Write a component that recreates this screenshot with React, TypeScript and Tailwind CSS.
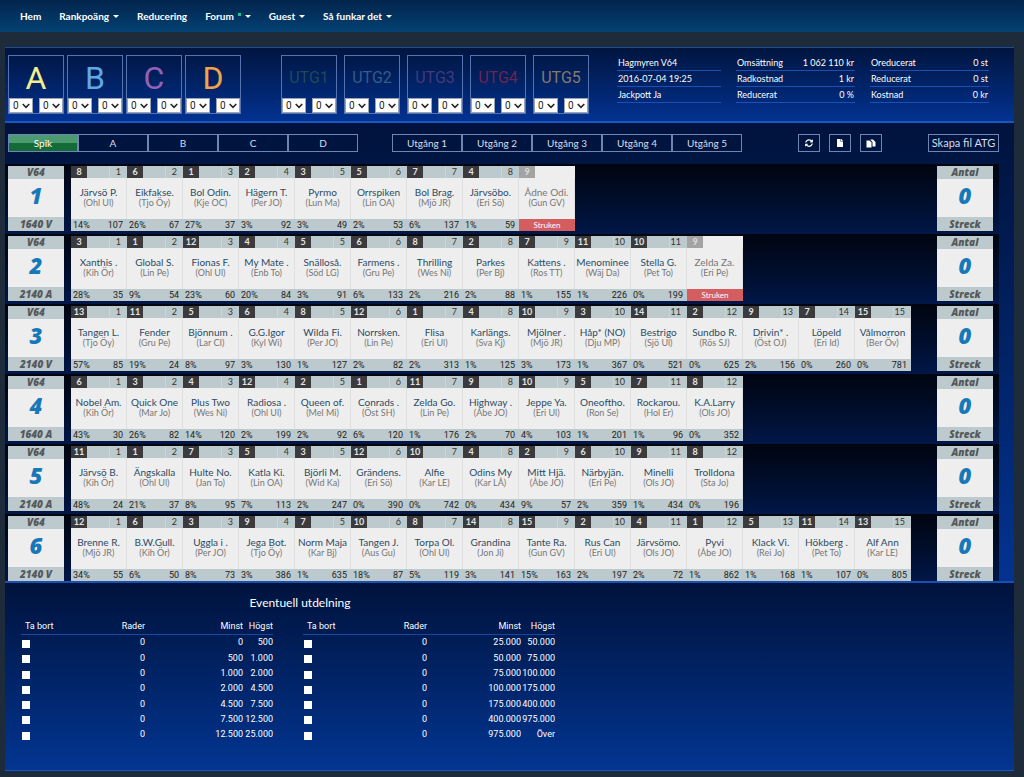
import type { ReactNode } from 'react';
import { FaFile, FaSyncAlt } from 'react-icons/fa';

type Horse = {
  nr: number;
  name: string;
  driver: string;
  percent?: number;
  odds?: number;
};

type Race = {
  nr: number;
  distance: string;
  horses: Horse[];
};

// number|name|driver|percent|odds, a scratched horse has no percent and odds
const parse = (text: string): Horse[] =>
  text
    .trim()
    .split('\n')
    .map((line) => {
      const [nr, name, driver, percent, odds] = line.trim().split('|');
      return {
        nr: Number(nr),
        name,
        driver,
        percent: percent ? Number(percent) : undefined,
        odds: odds ? Number(odds) : undefined,
      };
    });

const races: Race[] = [
  {
    nr: 1,
    distance: '1640 V',
    horses: parse(`
      8|Järvsö P.|Ohl Ul|14|107
      6|Eikfakse.|Tjo Öy|26|67
      1|Bol Odin.|Kje OC|27|37
      2|Hägern T.|Per JO|3|92
      3|Pyrmo|Lun Ma|3|49
      5|Orrspiken|Lin OA|2|53
      7|Bol Brag.|Mjö JR|6|137
      4|Järvsöbo.|Eri Sö|1|59
      9|Ådne Odi.|Gun GV`),
  },
  {
    nr: 2,
    distance: '2140 A',
    horses: parse(`
      3|Xanthis .|Kih Ör|28|35
      1|Global S.|Lin Pe|9|54
      12|Fionas F.|Ohl Ul|23|60
      4|My Mate .|Enb To|20|84
      5|Snälloså.|Söd LG|3|91
      6|Farmens .|Gru Pe|6|133
      8|Thrilling|Wes Ni|2|216
      2|Parkes|Per Bj|2|88
      7|Kattens .|Ros TT|1|155
      11|Menominee|Wäj Da|1|226
      10|Stella G.|Pet To|0|199
      9|Zelda Za.|Eri Pe`),
  },
  {
    nr: 3,
    distance: '2140 V',
    horses: parse(`
      13|Tangen L.|Tjo Öy|57|85
      11|Fender|Gru Pe|19|24
      5|Bjönnum .|Lar CI|8|97
      6|G.G.Igor|Kyl Wi|3|130
      8|Wilda Fi.|Per JO|1|127
      12|Norrsken.|Lin Pe|2|82
      1|Flisa|Eri Ul|2|313
      4|Karlängs.|Sva Kj|1|125
      10|Mjölner .|Mjö JR|3|173
      3|Håp* (NO)|Dju MP|1|367
      14|Bestrigo|Sjö Ul|0|521
      2|Sundbo R.|Rös SJ|0|625
      9|Drivin* .|Öst OJ|2|156
      7|Löpeld|Eri Id|0|260
      15|Vålmorron|Ber Öv|0|781`),
  },
  {
    nr: 4,
    distance: '1640 A',
    horses: parse(`
      6|Nobel Am.|Kih Ör|43|30
      3|Quick One|Mar Jo|26|82
      4|Plus Two|Wes Ni|14|120
      12|Radiosa .|Ohl Ul|2|199
      2|Queen of.|Mel Mi|2|92
      1|Conrads .|Öst SH|6|120
      11|Zelda Go.|Lin Pe|1|176
      9|Highway .|Åbe JO|2|70
      10|Jeppe Ya.|Eri Ul|4|103
      5|Oneoftho.|Ron Se|1|201
      7|Rockarou.|Hol Er|1|96
      8|K.A.Larry|Ols JO|0|352`),
  },
  {
    nr: 5,
    distance: '2140 A',
    horses: parse(`
      11|Järvsö B.|Kih Ör|48|24
      1|Ängskalla|Ohl Ul|21|37
      7|Hulte No.|Jan To|8|95
      5|Katla Ki.|Lin OA|7|113
      3|Björli M.|Wid Ka|2|247
      12|Grändens.|Eri Sö|0|390
      10|Alfie|Kar LE|0|742
      4|Odins My|Kar LÅ|0|434
      2|Mitt Hjä.|Åbe JO|9|57
      6|Närbyjän.|Eri Pe|2|359
      9|Minelli|Ols JO|1|434
      8|Trolldona|Sta Jo|0|196`),
  },
  {
    nr: 6,
    distance: '2140 V',
    horses: parse(`
      12|Brenne R.|Mjö JR|34|55
      6|B.W.Gull.|Kih Ör|6|50
      3|Uggla i .|Per JO|8|73
      9|Jega Bot.|Tjo Öy|3|386
      7|Norm Maja|Kar Bj|1|635
      10|Tangen J.|Aus Gu|18|87
      8|Torpa Ol.|Ohl Ul|5|119
      14|Grandina|Jon Ji|3|141
      15|Tante Ra.|Gun GV|15|163
      2|Rus Can|Eri Ul|2|197
      4|Järvsömo.|Ols JO|2|72
      1|Pyvi|Åbe JO|1|862
      5|Klack Vi.|Rei Jo|1|168
      11|Hökberg .|Pet To|1|107
      13|Alf Ann|Kar LE|0|805`),
  },
];

const menu = [
  { label: 'Hem' },
  { label: 'Rankpoäng', dropdown: true },
  { label: 'Reducering' },
  { label: 'Forum', dropdown: true, unread: true },
  { label: 'Guest', dropdown: true },
  { label: 'Så funkar det', dropdown: true },
];

const ranks = [
  { label: 'A', color: 'text-[#f2ef8e]' },
  { label: 'B', color: 'text-[#5fa8e8]' },
  { label: 'C', color: 'text-[#9361b5]' },
  { label: 'D', color: 'text-[#f2a348]' },
];

const exits = [
  { label: 'UTG1', color: 'text-[#1f4a5c]' },
  { label: 'UTG2', color: 'text-[#345c8c]' },
  { label: 'UTG3', color: 'text-[#45397c]' },
  { label: 'UTG4', color: 'text-[#6e2450]' },
  { label: 'UTG5', color: 'text-[#85796f]' },
];

const info = [
  {
    width: 'w-[104px]',
    rows: [['Hagmyren V64'], ['2016-07-04 19:25'], ['Jackpott Ja']],
  },
  {
    width: 'w-[119px]',
    rows: [
      ['Omsättning', '1 062 110 kr'],
      ['Radkostnad', '1 kr'],
      ['Reducerat', '0 %'],
    ],
  },
  {
    width: 'w-[119px]',
    rows: [
      ['Oreducerat', '0 st'],
      ['Reducerat', '0 st'],
      ['Kostnad', '0 kr'],
    ],
  },
];

const payouts = [
  {
    maxWidth: 'w-[30px]',
    rows: [
      ['0', '500'],
      ['500', '1.000'],
      ['1.000', '2.000'],
      ['2.000', '4.500'],
      ['4.500', '7.500'],
      ['7.500', '12.500'],
      ['12.500', '25.000'],
    ],
  },
  {
    maxWidth: 'w-[34px]',
    rows: [
      ['25.000', '50.000'],
      ['50.000', '75.000'],
      ['75.000', '100.000'],
      ['100.000', '175.000'],
      ['175.000', '400.000'],
      ['400.000', '975.000'],
      ['975.000', 'Över'],
    ],
  },
];

function CountSelect({ label }: { label: string }) {
  return (
    <div className="relative h-[15px] w-6">
      <select
        aria-label={label}
        defaultValue="0"
        className="block h-full w-full appearance-none border border-[#9aa4b8] bg-white pl-[3px] font-['Roboto',sans-serif] text-[10px] leading-[13px] text-[#222]"
      >
        {[0, 1, 2, 3, 4, 5, 6].map((n) => (
          <option key={n} value={n}>
            {n}
          </option>
        ))}
      </select>
      <svg
        viewBox="0 0 8 6"
        className="pointer-events-none absolute top-[5px] right-[3px] h-[6px] w-2"
        fill="none"
        stroke="#222"
        strokeWidth="1.5"
      >
        <path d="M0.7 0.9 4 4.3 7.3 0.9" />
      </svg>
    </div>
  );
}

function RankBox({ label, className }: { label: string; className: string }) {
  return (
    <div className="flex h-[59px] w-14 flex-col border border-[#5673ae]">
      <div className={`flex grow items-center justify-center pt-[2px] font-['Roboto',sans-serif] ${className}`}>
        {label}
      </div>
      <div className="flex justify-between">
        <CountSelect label={`${label} minst`} />
        <CountSelect label={`${label} högst`} />
      </div>
    </div>
  );
}

function Tabs({ items, active }: { items: string[]; active?: string }) {
  return (
    <div className="flex">
      {items.map((item) => (
        <button
          key={item}
          type="button"
          className={`h-[18px] w-[70px] border border-[#6f86b5] text-[10px] leading-4 ${
            item === active
              ? 'bg-linear-to-b from-[#4b9a70] from-50% to-[#146b38] to-50% text-white'
              : 'bg-[#001440] text-[#d5dcea]'
          }`}
        >
          {item}
        </button>
      ))}
    </div>
  );
}

function IconButton({ label, children }: { label: string; children: ReactNode }) {
  return (
    <button
      type="button"
      aria-label={label}
      className="flex h-[18px] w-[22px] items-center justify-center border border-[#6f86b5] text-white"
    >
      {children}
    </button>
  );
}

function SideCard({ top, value, bottom }: { top: string; value: string; bottom: string }) {
  return (
    <div className="flex h-[65px] w-14 shrink-0 flex-col bg-[#eee] text-center font-['Open_Sans',sans-serif] font-extrabold italic">
      <div className="h-[13px] bg-[#bccacd] text-[10px] leading-[13px] text-[#55585b]">{top}</div>
      <div className="grow text-[22px] leading-8 text-[#1678b8]">{value}</div>
      <div className="h-[14px] bg-[#bccacd] text-[10px] leading-[14px] text-[#55585b]">{bottom}</div>
    </div>
  );
}

function HorseCell({ horse, index }: { horse: Horse; index: number }) {
  const scratched = horse.percent === undefined;

  return (
    <li className="flex h-[65px] w-14 shrink-0 flex-col bg-[#eee]">
      <div
        className={`flex h-3 justify-between text-[9px] leading-3 ${scratched ? '' : 'bg-[#bccacd]'}`}
      >
        <span
          className={`w-4 text-center font-bold ${
            scratched ? 'bg-[#a3a3a3] text-[#ddd]' : 'bg-[#3b3b3e] text-[#e5e5e5]'
          }`}
        >
          {horse.nr}
        </span>
        {scratched ? null : (
          <span className="w-[18px] border-l border-[#c8d4d6] pr-[6px] text-right text-[#333]">
            {index}
          </span>
        )}
      </div>
      <div
        className={`flex grow flex-col items-center border-r border-[#dfdfdf] pt-2 whitespace-nowrap ${
          scratched ? 'text-[#777]' : 'text-[#2c4a63]'
        }`}
      >
        <span className="text-[10px] leading-3">{horse.name}</span>
        <span className="text-[9px] leading-[10px] text-[#777]">({horse.driver})</span>
      </div>
      {scratched ? (
        <div className="h-3 bg-[#d45d5f] text-center text-[8px] leading-3 text-white">Struken</div>
      ) : (
        <div className="flex h-3 justify-between bg-[#bccacd] pr-1 pl-[2px] font-['Roboto',sans-serif] text-[9px] leading-3 text-[#222]">
          <span>{horse.percent}%</span>
          <span>{horse.odds}</span>
        </div>
      )}
    </li>
  );
}

function PayoutTable({ rows, maxWidth }: { rows: string[][]; maxWidth: string }) {
  return (
    <table className="h-[124px] w-[252px] table-fixed text-right font-['Roboto',sans-serif] text-[9px] leading-[10px]">
      <thead>
        <tr className="h-4 border-b border-[#1748a0]">
          <th className="w-[60px] pl-1 text-left font-normal">Ta bort</th>
          <th className="w-16 font-normal">Rader</th>
          <th className="font-normal">Minst</th>
          <th className={`font-normal ${maxWidth}`}>Högst</th>
        </tr>
      </thead>
      <tbody>
        {rows.map(([min, max]) => (
          <tr key={min}>
            <td className="pt-[3px] pl-px text-left">
              <input
                type="checkbox"
                aria-label={`Ta bort ${min} - ${max}`}
                className="block size-2 appearance-none bg-white checked:bg-[#1c58c8]"
              />
            </td>
            <td>0</td>
            <td>{min}</td>
            <td>{max}</td>
          </tr>
        ))}
      </tbody>
    </table>
  );
}

export default function App() {
  return (
    <div className="min-h-screen bg-[#1d2b3a] pb-2 font-['Lato',sans-serif] text-white">
      <nav className="h-8 bg-linear-to-b from-[#02244d] to-[#044273]">
        <ul className="flex h-full items-center gap-[18px] pl-5 text-[10px] font-bold">
          {menu.map((item) => (
            <li key={item.label}>
              <a href="#" className="flex items-center gap-1">
                {item.label}
                {item.unread ? <span className="mb-1 size-[3px] bg-[#17c794]" /> : null}
                {item.dropdown ? (
                  <svg viewBox="0 0 6 3" className="h-[3px] w-[6px]" fill="currentColor">
                    <path d="M0 0h6L3 3z" />
                  </svg>
                ) : null}
              </a>
            </li>
          ))}
        </ul>
      </nav>

      <main className="mt-[15px] mr-[10px] ml-[5px]">
        <section className="flex border-t border-b-2 border-t-[#1d4c94] border-b-[#1b57c2] bg-linear-to-b from-[#001540] to-[#033291] pt-[7px] pb-[7px] pl-[3px]">
          <div className="flex gap-[3px]">
            {ranks.map((rank) => (
              <RankBox key={rank.label} label={rank.label} className={`text-[32px] leading-8 ${rank.color}`} />
            ))}
          </div>
          <div className="ml-10 flex gap-[7px]">
            {exits.map((exit) => (
              <RankBox key={exit.label} label={exit.label} className={`text-[16px] ${exit.color}`} />
            ))}
          </div>
          <div className="ml-7 flex gap-[15px] text-[9px] leading-[15px]">
            {info.map((column, i) => (
              <dl key={i} className={column.width}>
                {column.rows.map(([term, value]) => (
                  <div key={term} className="flex justify-between border-b border-[#1850b4] px-px">
                    <dt>{term}</dt>
                    {value ? <dd>{value}</dd> : null}
                  </div>
                ))}
              </dl>
            ))}
          </div>
        </section>

        <section className="bg-linear-to-b from-[#00133d] to-[#033391] pr-[15px]">
          <div className="flex items-center pt-[11px] pb-3 pl-[3px]">
            <Tabs items={['Spik', 'A', 'B', 'C', 'D']} active="Spik" />
            <div className="ml-[34px]">
              <Tabs items={['Utgång 1', 'Utgång 2', 'Utgång 3', 'Utgång 4', 'Utgång 5']} />
            </div>
            <div className="ml-14 flex gap-[9px]">
              <IconButton label="Nollställ">
                <FaSyncAlt className="size-2" />
              </IconButton>
              <IconButton label="Ny fil">
                <FaFile className="size-2" />
              </IconButton>
              <IconButton label="Kopiera fil">
                <svg viewBox="0 0 20 18" className="h-[9px] w-[10px]" fill="currentColor">
                  <path d="M1 3h6l4 4v10H1z" />
                  <path d="M9 1h5l5 5v9h-6V6L9 2z" />
                </svg>
              </IconButton>
            </div>
            <button
              type="button"
              className="ml-auto h-[18px] w-[71px] border border-[#6f86b5] text-[11px] leading-4 whitespace-nowrap text-[#d5dcea]"
            >
              Skapa fil ATG
            </button>
          </div>

          <div>
            {races.map((race) => (
              <div
                key={race.nr}
                className="flex bg-linear-to-b from-[#000510] to-[#001748] pt-[2px] pr-[6px] pb-[3px] pl-[3px] last:pb-0"
              >
                <SideCard top="V64" value={String(race.nr)} bottom={race.distance} />
                <ul className="ml-[7px] flex">
                  {race.horses.map((horse, i) => (
                    <HorseCell key={horse.nr} horse={horse} index={i + 1} />
                  ))}
                </ul>
                <div className="ml-auto">
                  <SideCard top="Antal" value="0" bottom="Streck" />
                </div>
              </div>
            ))}
          </div>
        </section>

        <section className="border-t-2 border-b border-t-[#1b4fb0] border-b-[#1b57c2] bg-linear-to-b from-[#00133d] to-[#033592] pt-3 pb-[28px] pl-4">
          <div className="w-[534px]">
            <h2 className="pl-6 text-center text-[12px] leading-4">Eventuell utdelning</h2>
            <div className="mt-[7px] flex justify-between">
              {payouts.map((payout, i) => (
                <PayoutTable key={i} rows={payout.rows} maxWidth={payout.maxWidth} />
              ))}
            </div>
          </div>
        </section>
      </main>
    </div>
  );
}
